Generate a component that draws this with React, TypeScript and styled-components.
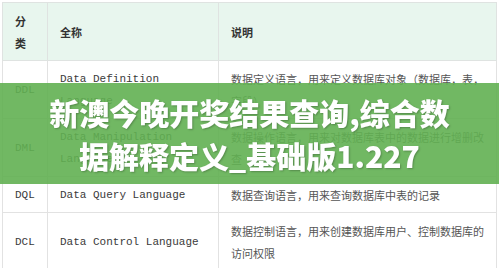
import React from "react";
import styled, { createGlobalStyle } from "styled-components";

const GlobalStyle = createGlobalStyle`
  html, body {
    margin: 0;
    padding: 0;
    background: #fff;
    overflow: hidden;
  }
`;

const Page = styled.div`
  position: relative;
  width: 499px;
  height: 268px;
  padding: 2px 0 0 2px;
  box-sizing: border-box;
  overflow: hidden;
`;

const Table = styled.table`
  width: 495px;
  border-collapse: collapse;
  table-layout: fixed;
  font-family: "Noto Sans CJK SC", "Noto Sans", sans-serif;
  font-size: 11px;
  color: #555;
`;

const Th = styled.th`
  background: #e8f6ee;
  border: 1px solid #dfe3e1;
  padding: 6.5px 12px;
  line-height: 22px;
  font-weight: 700;
  color: #333;
  text-align: left;
  word-break: break-all;
`;

const Td = styled.td<{ $mono?: boolean }>`
  border: 1px solid #e2e2e2;
  padding: 6.5px 12px;
  line-height: 22px;
  vertical-align: middle;
  text-align: left;
  font-family: ${({ $mono }) =>
    $mono ? `"Liberation Mono", "DejaVu Sans Mono", monospace` : "inherit"};
  color: ${({ $mono }) => ($mono ? "#3a3a3a" : "#555")};
  word-break: ${({ $mono }) => ($mono ? "normal" : "break-all")};
`;

const Banner = styled.div`
  position: absolute;
  left: 0;
  right: 0;
  top: 83px;
  height: 101px;
  background: rgba(98, 176, 82, 0.9);
  backdrop-filter: blur(0.6px);
  display: flex;
  align-items: center;
  justify-content: center;
`;

const Title = styled.h1`
  margin: 0;
  max-width: 412px;
  font-family: "Noto Sans CJK SC", "Noto Sans", sans-serif;
  font-size: 30px;
  line-height: 43px;
  font-weight: 900;
  color: #fff;
  text-align: center;
  text-shadow: 1px 1px 2px rgba(0, 0, 0, 0.25);
`;

const rows = [
  {
    code: "DDL",
    name: "Data Definition Language",
    desc: "数据定义语言，用来定义数据库对象（数据库，表，字段）",
  },
  {
    code: "DML",
    name: "Data Manipulation Language",
    desc: "数据操作语言，用来对数据库表中的数据进行增删改查",
  },
  {
    code: "DQL",
    name: "Data Query Language",
    desc: "数据查询语言，用来查询数据库中表的记录",
  },
  {
    code: "DCL",
    name: "Data Control Language",
    desc: "数据控制语言，用来创建数据库用户、控制数据库的访问权限",
  },
];

export default function App() {
  return (
    <Page>
      <GlobalStyle />
      <Table>
        <colgroup>
          <col style={{ width: 45 }} />
          <col style={{ width: 171 }} />
          <col />
        </colgroup>
        <thead>
          <tr>
            <Th>分类</Th>
            <Th>全称</Th>
            <Th>说明</Th>
          </tr>
        </thead>
        <tbody>
          {rows.map((r) => (
            <tr key={r.code}>
              <Td $mono>{r.code}</Td>
              <Td $mono>{r.name}</Td>
              <Td>{r.desc}</Td>
            </tr>
          ))}
        </tbody>
      </Table>
      <Banner>
        <Title>新澳今晚开奖结果查询,综合数据解释定义_基础版1.227</Title>
      </Banner>
    </Page>
  );
}
